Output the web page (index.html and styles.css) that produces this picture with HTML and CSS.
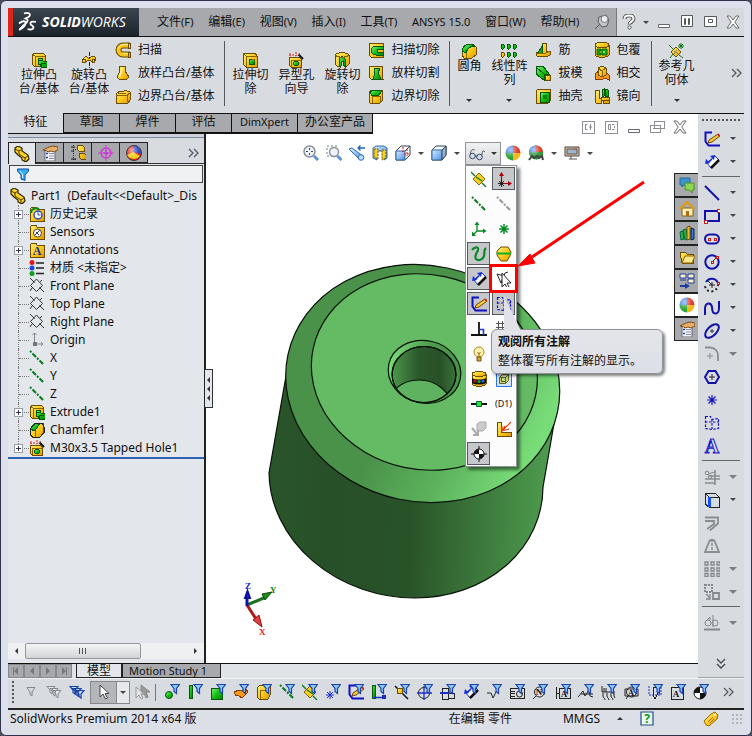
FILE: index.html
```html
<!DOCTYPE html>
<html lang="zh-CN">
<head>
<meta charset="utf-8">
<title>SolidWorks Premium 2014</title>
<link rel="stylesheet" href="styles.css">
</head>
<body>
<svg class="sprite" aria-hidden="true">
<defs>
<linearGradient id="gy" x1="0" y1="0" x2="1" y2="1"><stop offset="0" stop-color="#fff27a"/><stop offset=".55" stop-color="#fbc81c"/><stop offset="1" stop-color="#e09a00"/></linearGradient>
<linearGradient id="gb" x1="0" y1="0" x2="1" y2="1"><stop offset="0" stop-color="#d8ecff"/><stop offset="1" stop-color="#4a90e2"/></linearGradient>
<linearGradient id="gg" x1="0" y1="0" x2="1" y2="1"><stop offset="0" stop-color="#8cf08c"/><stop offset=".5" stop-color="#19c219"/><stop offset="1" stop-color="#078a07"/></linearGradient>
<radialGradient id="shine" cx=".35" cy=".3" r=".5"><stop offset="0" stop-color="#fff" stop-opacity=".6"/><stop offset="1" stop-color="#fff" stop-opacity="0"/></radialGradient>
</defs>
<symbol id="extrude" viewBox="0 0 16 16"><path class="y" d="M1 3l2-2h9l2 2v10l-1 1H3l-2-2z"/><path class="yl" d="M4 4h10M4 4v10M1 2l3 2"/><path class="g" d="M7 6h4l1 3h4v6h-6l-1-3H7z"/><path class="gl" d="M10 11h5M10 11v4M8 8h3"/></symbol>
<symbol id="revolve" viewBox="0 0 16 16"><path class="k" stroke-dasharray="4 1" d="M8 0v16"/><path class="y" d="M2 7c2-3 4-3 5-1s2 0 3-1c2-2 5 0 5 2 0 3-4 4-5 2-1-1-3-1-4 0-1 2-5 1-4-2z"/><circle class="y" cx="3" cy="9" r="1.500"/><circle class="y" cx="12.500" cy="9" r="1.500"/></symbol>
<symbol id="sweep" viewBox="0 0 16 16"><path d="M15 3.500H8a4.500 4.500 0 000 9h7" fill="none" stroke="#6b4c00" stroke-width="6"/><path d="M15 3.500H8a4.500 4.500 0 000 9h7" fill="none" stroke="#f8c41c" stroke-width="4"/><path d="M14 2.500H8a5 5 0 00-4.500 4M8 11.500h6" fill="none" stroke="#fff29a"/><path class="y" d="M13 10h2v5h-2zM13 1h2v5h-2z"/></symbol>
<symbol id="loft" viewBox="0 0 16 16"><path class="y" d="M5 1h5l1 2-1 3 4 6-2 2-4 1-4-1-2-2 3-6-1-3z"/><path d="M6.500 2v4l-2 6" fill="none" stroke="#fff8b0" stroke-width="1.500"/></symbol>
<symbol id="boundary" viewBox="0 0 16 16"><path class="y" d="M1 6l4-3 2 1 4-2 1 1 3 1v8l-2 3H1z"/><path class="yl" d="M1 7h11l3-2M12 7v7M3 5h8"/></symbol>
<symbol id="cutextrude" viewBox="0 0 16 16"><path class="y" d="M1 1h12l2 3v11H4l-3-3z"/><path class="yl" d="M4 4h11M4 4v11M1 1l3 3"/><path class="g" d="M7 7h5v5H7z"/><path d="M10 7.500h2v2" fill="none" stroke="#e06a2a"/></symbol>
<symbol id="hole" viewBox="0 0 16 16"><path class="y" d="M1 5h10l2 2v8H3l-2-2z"/><path class="yl" d="M3 8h10M3 8v7"/><circle class="g" cx="8" cy="11.500" r="2.500"/><path d="M2 1v2M5 2v2M8 0v2M11 1v1M1 3l2 1M7 4l2-1" stroke="#e02010"/><path d="M10 2l5 5" stroke="#111" stroke-width="2"/><path d="M9.500 1.500l1 1" stroke="#fff" stroke-width="1.500"/></symbol>
<symbol id="cutrevolve" viewBox="0 0 16 16"><path class="y" d="M1 3c2-3 12-3 14 0v9c-1 2-4 3-4 3V7H6v8s-4-1-5-3z"/><path class="g" d="M5 15V7c2-3 4-3 6 0v8l-2-2V9H7v5z"/><path class="yl" d="M1 3c3 3 11 3 14 0"/></symbol>
<symbol id="cutsweep" viewBox="0 0 16 16"><path class="y" d="M1 1h14v14H3l-2-2z"/><path class="g" d="M15 4H8a4 4 0 000 9h7v-3H9V7h6z"/></symbol>
<symbol id="cutloft" viewBox="0 0 16 16"><path class="y" d="M1 1h13l1 13H3l-2-2z"/><path class="g" d="M6 3h6l-2 5 3 6H5l2-6z"/></symbol>
<symbol id="cutboundary" viewBox="0 0 16 16"><path class="y" d="M1 4l3-2h10l1 10-3 3H2l-1-2z"/><path class="g" d="M2 4l4-2 8 1-3 4-7 1z"/><path class="yl" d="M4 8h8v7M4 8v7"/></symbol>
<symbol id="fillet" viewBox="0 0 16 16"><path class="y" d="M1 8l5-6 6-1 3 3v8l-4 3H3l-2-3z"/><path class="g" d="M1 8C2 3 5 1 9 1l5 2C9 3 6 6 5 10z"/><path class="yl" d="M5 10c0 2 0 3 1 5"/></symbol>
<symbol id="pattern" viewBox="0 0 16 16"><g class="g"><rect x="0" y="1" width="3" height="5" rx="1"/><rect x="6" y="1" width="3" height="5" rx="1"/><rect x="12" y="1" width="3" height="5" rx="1"/><rect x="6" y="9" width="3" height="5" rx="1"/><rect x="12" y="9" width="3" height="5" rx="1"/></g><rect class="y" x="0" y="9" width="3" height="5" rx="1"/></symbol>
<symbol id="rib" viewBox="0 0 16 16"><path class="y" d="M7 1h4v8h4v4l-4 2-9-1-1-3 6-3z"/><path class="g" d="M7 4v7H3z"/><path class="yl" d="M2 11h9l4-2"/></symbol>
<symbol id="draft" viewBox="0 0 16 16"><path class="g" d="M1 1h7l6 8v6H9L1 9z"/><path class="gl" d="M1 2l8 7v6M9 9h5"/><path class="y" d="M10 10h5v5h-5z"/></symbol>
<symbol id="shell" viewBox="0 0 16 16"><path class="y" d="M1 3l2-2h12v12l-2 2H1z"/><path class="g" d="M5 4h9v10H5z"/><path d="M8 7h4v4H8z" fill="#0a8a0a"/></symbol>
<symbol id="wrap" viewBox="0 0 16 16"><path class="y" d="M1 3v10c2 3 12 3 14 0V3z"/><ellipse class="y" cx="8" cy="3" rx="7" ry="2.500"/><path d="M3 7h4v2H5v2h2v2H3zM8 7h5v6H8z" fill="#16b416" stroke="#054d05" stroke-width=".8"/><path d="M10 9v2" stroke="#dfd"/></symbol>
<symbol id="intersect" viewBox="0 0 16 16"><path class="o" d="M1 9l4-3 3 3 4-2 3 3v5l-4-2-4 2-6-1z"/><path class="y" d="M4 3l4-2 4 2v7l-4 2-4-2z"/><path class="yl" d="M4 3l4 3 4-3M8 6v6"/></symbol>
<symbol id="mirror" viewBox="0 0 16 16"><path class="y" d="M1 2h4v8h2v5H2l-1-1zM9 10h6v5H9z"/><path class="g" d="M8 2l2-1v7L8 9zM11 1l3 1v6h-3z"/><path class="y" d="M7 9h8v3H7z"/></symbol>
<symbol id="refgeo" viewBox="0 0 16 16"><path class="y" d="M7 4l5 5-5 5-5-5z"/><path d="M0 2l4 4M10 12l4 3M1 15l3-4" stroke="#087808"/><path d="M12 0v6M9 3h6M10 1l4 4M14 1l-4 4" stroke="#087808"/><path d="M5 8l4 3M8 7l-3 4" stroke="#777"/></symbol>

<symbol id="pin" viewBox="0 0 16 16"><path d="M1 15l5-5" stroke="#555"/><path d="M5 3l7-2 3 5-2 6-5 1-4-5z" fill="#c4c6c9" stroke="#5b5e62"/><circle cx="10.500" cy="5" r="3.500" fill="#eceef0" stroke="#74777b"/></symbol>
<symbol id="help" viewBox="0 0 16 16"><path d="M3.500 5c0-5 9-5 9 0 0 3-4 2.500-4 5.500" fill="none" stroke="#555" stroke-width="4"/><path d="M3.500 4.800c0-4.500 9-4.500 9 0 0 3-4 2.500-4 5" fill="none" stroke="#fff" stroke-width="2"/><circle cx="8.500" cy="13.500" r="1.600" fill="#fff" stroke="#555"/></symbol>
<symbol id="min" viewBox="0 0 16 16"><path d="M2.500 10.500h11v3h-11z" fill="#fff" stroke="#66696d"/></symbol>
<symbol id="tile" viewBox="0 0 16 16"><path d="M2.500 1.500h11v11h-11z" fill="#fff" stroke="#55585c"/><path d="M5.500 4.500h1v6h-1zM9.500 4.500h1v6h-1z" fill="none" stroke="#55585c"/></symbol>
<symbol id="max" viewBox="0 0 16 16"><path d="M2.500 2.500h12v10h-12z" fill="#fff" stroke="#55585c"/><path d="M6.500 5.500h4v3h-4z" fill="none" stroke="#55585c"/></symbol>
<symbol id="close" viewBox="0 0 16 16"><path d="M2 2h3l3 4 3-4h3L9.800 8l4.200 6h-3L8 10l-3 4H2l4.200-6z" fill="#fff" stroke="#686b6f"/></symbol>
<symbol id="tile1" viewBox="0 0 16 16"><path class="w" d="M2 2h12v12H2z"/><path class="gr" d="M7.500 5.500h-2v5h2M10.500 5v6M9 8h3"/></symbol>
<symbol id="tile2" viewBox="0 0 16 16"><path class="w" d="M2 2h12v12H2z"/><path class="gr" d="M5.500 5.500h2v5h-2zM9 5.500h2.500M9 10.500h2.500M11.500 7v2"/></symbol>
<symbol id="restore" viewBox="0 0 16 16"><path class="w" d="M5 2h10v7H5zM1 6h10v7H1z"/><path class="gr" d="M4 9.500h4"/></symbol>

<symbol id="part" viewBox="0 0 16 16"><path d="M1 2l3-2 4 2v3l6 4 1 4-3 3-4-2v-2L4 9 1 6z" fill="#ffd42a" stroke="#2b2100" stroke-width="1.200"/><path d="M1 3l4 2 3-2M5 5v3l6 4 3-2M11 12v3" fill="none" stroke="#4b3900"/></symbol>
<symbol id="props" viewBox="0 0 16 16"><path d="M3 5h10v11H3z" fill="#f6f6fa" stroke="#667"/><path d="M7 8.500h5M7 11h5M7 13.500h5" stroke="#88a"/><path d="M4.500 8h1v1h-1zM4.500 12h1v1h-1z" fill="#14a" stroke="#14a"/><path d="M1 5l6-3 4-1 5 1v3l-4 2-3-1-3 1-1-1z" fill="#e6b06c" stroke="#7a4b18"/></symbol>
<symbol id="config" viewBox="0 0 16 16"><path class="k" stroke-dasharray="1 1" d="M3 0v14h4M3 4h4"/><path d="M1 2h4M1 6h3M1 14h5" stroke="#222"/><path class="y" d="M7 1l5-1 2 2v4H9L7 4zM9 9l5-1 2 2v4h-5l-2-2z"/></symbol>
<symbol id="target" viewBox="0 0 16 16"><circle cx="8" cy="8" r="5" fill="none" stroke="#d038d8" stroke-width="1.500"/><path d="M8 0v16M0 8h16" stroke="#d038d8"/><path d="M8 5.500v5M5.500 8h5" stroke="#d038d8" stroke-width="1.500"/></symbol>
<symbol id="ball" viewBox="0 0 16 16"><path d="M8 8V.5A7.500 7.500 0 0115.500 8z" fill="#e23a28"/><path d="M8 8h7.500A7.500 7.500 0 018 15.500z" fill="#f2b81c"/><path d="M8 8v7.500A7.500 7.500 0 01.5 8z" fill="#2da53a"/><path d="M8 .5A7.500 7.500 0 00.5 8H8z" fill="#3a7ee0"/><circle cx="8" cy="8" r="7.500" fill="url(#shine)"/></symbol>
<symbol id="ball2" viewBox="0 0 16 16"><circle cx="8" cy="8" r="7.500" fill="#e02a1c" stroke="#433"/><path d="M8 .5A7.500 7.500 0 0115 9L8 7z" fill="#2650c8"/><path d="M1 10l6-3 7 4a8 8 0 01-13-1z" fill="#f4cc20"/><circle cx="8" cy="8" r="7" fill="url(#shine)"/></symbol>
<symbol id="ballg" viewBox="0 0 16 16"><circle cx="8" cy="7.500" r="7" fill="#2f9a3a"/><path d="M8 7V.5A7 7 0 0115 7z" fill="#e23a28"/><path d="M8 7h7a7 7 0 01-7 7.500z" fill="#2f9a3a"/><path d="M1 7.500A7 7 0 018 .5V7z" fill="#3a7ee0"/><circle cx="8" cy="7.500" r="7" fill="url(#shine)"/><path d="M1 15l3-4 2 2 3-2 2 2 3-2 1 4" fill="none" stroke="#444" stroke-width="2"/></symbol>
<symbol id="funnel" viewBox="0 0 16 16"><path d="M2.500 3h11v2L10 9v5.500l-4-1.500V9L2.500 5z" fill="#35aef5" stroke="#0b4fa6"/><path d="M5 5l2.500 3v4" fill="none" stroke="#cff0ff"/></symbol>
<symbol id="history" viewBox="0 0 16 16"><path class="y" d="M1 3l2-2h4l1 2h7v12H1z"/><circle cx="9" cy="9" r="4" fill="#fff" stroke="#2a48b8" stroke-width="1.400"/><path d="M9 6v3h2.500" fill="none" stroke="#2a48b8"/><path d="M2 7c0-4 5-6 8-4" fill="none" stroke="#0a8c1c" stroke-width="2"/></symbol>
<symbol id="sensor" viewBox="0 0 16 16"><path class="y" d="M1 3l2-2h4l1 2h7v12H1z"/><circle cx="8.500" cy="9" r="4" fill="#fff" stroke="#444"/><path d="M6 11l5-5M7 8l3 3" stroke="#446"/></symbol>
<symbol id="annot" viewBox="0 0 16 16"><path class="y" d="M1 3l2-2h4l1 2h7v12H1z"/></symbol>
<symbol id="material" viewBox="0 0 16 16"><circle cx="3" cy="2.500" r="2.500" fill="#e0181c"/><circle cx="3" cy="8" r="2.500" fill="#1c48e0"/><circle cx="3" cy="13.500" r="2.500" fill="#10a018"/><path d="M7 3h8M7 8h8M7 13.500h8" stroke="#222" stroke-width="1.500"/></symbol>
<symbol id="plane" viewBox="0 0 16 16"><path d="M7.500 1l6 6.500-6 6-6-6zM1 0l14 14M13 2l-2 2M3 10l-2 3" fill="none" stroke="#333"/><path d="M7.500 2.500l5 5-5 4.800-4.800-4.800z" fill="#e3e6ea"/></symbol>
<symbol id="origin" viewBox="0 0 16 16"><path d="M5.500 1v11H14M3.500 3l2-2 2 2M12 10l2 2-2 2" fill="none" stroke="#85888c"/><path d="M4 10h4v4H4z" fill="#777"/></symbol>
<symbol id="axis" viewBox="0 0 16 16"><path d="M1 1l14 14" stroke="#057c1c" stroke-width="2" stroke-dasharray="2 1.500 5 1.500"/></symbol>
<symbol id="axisgray" viewBox="0 0 16 16"><path d="M1 1l14 14" stroke="#999" stroke-width="2" stroke-dasharray="2 1.500 5 1.500"/></symbol>
<symbol id="chamfer" viewBox="0 0 16 16"><path class="y" d="M1 7l6-5 7-1 1 9-4 5H3l-2-3z"/><path class="g" d="M1 7l5-6h5L6 9z"/><path class="yl" d="M6 9l1 6"/><path class="k" d="M1 7l6-6h6l2 4v6l-4 4H4l-3-3z"/></symbol>

<symbol id="zoomfit" viewBox="0 0 16 16"><circle cx="6.500" cy="6.500" r="5.500" fill="#eef3fa" stroke="#8b929c" stroke-width="1.500"/><path d="M6.500 3v7M3 6.500h7" stroke="#444" stroke-dasharray="2 3"/><path d="M11 11l4 4" stroke="#5a94d8" stroke-width="3"/></symbol>
<symbol id="zoomarea" viewBox="0 0 16 16"><path d="M1 1h10v10H1z" fill="none" stroke="#777" stroke-dasharray="2 2"/><circle cx="8" cy="7" r="4.500" fill="#eef3fa" stroke="#8b929c" stroke-width="1.500"/><path d="M11.500 11l4 4" stroke="#5a94d8" stroke-width="3"/></symbol>
<symbol id="prevview" viewBox="0 0 16 16"><path d="M0 4l3-1 11 8-3 4z" fill="url(#gb)" stroke="#2f6fb8"/><circle cx="12" cy="12.500" r="2.800" fill="#b8dcff" stroke="#2f6fb8"/><path d="M16 3H9M11.500 .5L9 3l2.500 2.500" fill="none" stroke="#1d62c0" stroke-width="1.300"/></symbol>
<symbol id="section" viewBox="0 0 16 16"><path d="M1 3l3-2h8l3 2v10l-3 2V6H5v9l-4-2z" fill="url(#gb)" stroke="#36689e"/><path d="M2 4h4v10l-4-2zM10 5h4v8l-4 2z" fill="#f5cc2a" stroke="#7a5a00" stroke-dasharray="2 1"/></symbol>
<symbol id="vieworient" viewBox="0 0 16 16"><path d="M1 6l5-5h9v9l-5 5H1z" fill="#fff" stroke="#345"/><path d="M1 6h9v9H1z" fill="url(#gb)" stroke="#36689e"/><path d="M10 6l5-5" stroke="#345"/><path d="M8 2v5M12 4v7M9 9h5" stroke="#d01818" stroke-dasharray="2 1"/></symbol>
<symbol id="cube" viewBox="0 0 16 16"><path d="M1 5l4-4h10v9l-4 5H1z" fill="#f2f8ff" stroke="#345"/><path d="M1 5h10v10H1z" fill="url(#gb)" stroke="#36689e"/><path d="M11 5l4-4v9l-4 5z" fill="#8db4e2" stroke="#345"/></symbol>
<symbol id="glasses" viewBox="0 0 16 16"><circle cx="3.500" cy="10" r="2.800" fill="#c8def4" stroke="#445"/><circle cx="10.500" cy="11" r="2.800" fill="#c8def4" stroke="#445"/><path d="M6 10h2M1.500 8c0-4 2-5 4-4M13 9c0-4 1-5 3-3" fill="none" stroke="#445"/></symbol>
<symbol id="display" viewBox="0 0 16 16"><path d="M1 2h14v9H1z" fill="#e3c9a8" stroke="#444"/><path d="M3 4h10v5H3z" fill="#9cb6cf" stroke="#654"/><path d="M5 14h8M7 11v3" stroke="#555"/><path d="M9 5l5-3" stroke="#a63"/></symbol>

<symbol id="m-plane" viewBox="0 0 16 16"><path d="M8 2l6 6-6 6-6-6z" fill="#f8cf22" stroke="#8a6400"/><path d="M0 1l4 4M5 6l6 4M11 12l4 4" stroke="#067a18" stroke-width="1.300"/></symbol>
<symbol id="m-origin" viewBox="0 0 16 16"><path d="M5.500 13V2M5 12.500h10" stroke="#b00010" stroke-width="1.200"/><path d="M3 5l2.500-4L8 5zM12 10l4 2.500-4 2.500z" fill="#b00010"/><path d="M3 10l5 5M8 10l-5 5M5.500 9v7M2 12.500h6" stroke="#222"/></symbol>
<symbol id="m-triad" viewBox="0 0 16 16"><path d="M6 2v8h8M6 10l-4 4" fill="none" stroke="#058a20" stroke-width="1.300"/><path d="M3.500 4L6 .5 8.500 4zM12 7.500l3.500 2.500-3.500 2.500zM1 10.500V15h4z" fill="#058a20"/></symbol>
<symbol id="m-point" viewBox="0 0 16 16"><path d="M8 3v10M3 8h10M4.500 4.500l7 7M11.500 4.500l-7 7" stroke="#058a20" stroke-width="1.500"/></symbol>
<symbol id="m-curve" viewBox="0 0 16 16"><path d="M1 4c2-3 7-4 6 0-1 3-4 6-2 9 2 2 7 1 8-3 1-3-1-6 2-8" fill="none" stroke="#07882a" stroke-width="2.200"/></symbol>
<symbol id="m-part" viewBox="0 0 16 16"><path d="M5 1h7l3 5-1 4-3 5H5L1 9l0-4z" fill="url(#gy)" stroke="#6b4c00"/><path d="M1 7.500h14" stroke="#0db321" stroke-width="2"/></symbol>
<symbol id="dim" viewBox="0 0 16 16"><path d="M7 14l8-8-4-4-8 7z" fill="#fff" stroke="#1430d8"/><path d="M7 14l8-8" stroke="#111" stroke-width="2.500"/><path d="M4 9l4-4" stroke="#1430d8" stroke-width="1.500"/><path d="M1 10l1-5 4 4zM11 1L6 2l4 4z" fill="#1430d8"/></symbol>
<symbol id="sketch" viewBox="0 0 16 16"><path d="M8 1.500H1.500v9l3 4H16" fill="none" stroke="#1010c0" stroke-width="2"/><path d="M5 9l9-6 2 2-8 6-4 1z" fill="#f8c93a" stroke="#70450e"/><path d="M13 3.500l2 2 1-1-1-2z" fill="#d02020"/></symbol>
<symbol id="m-note" viewBox="0 0 16 16"><path d="M1 3l4 9 4-10 3-1M1 3l7 2M5 12l5-2" fill="none" stroke="#222"/><path d="M6 2v14l3-3 2 4 2-1-2-4h4z" fill="#fff" stroke="#222"/></symbol>
<symbol id="region" viewBox="0 0 16 16"><path d="M1.500 1.500h5l1 3 7-1v10l-7 1-6-1zM1 7h14M8 4v10" fill="none" stroke="#1414c0" stroke-width="1.200" stroke-dasharray="2.500 1.500"/></symbol>
<symbol id="m-perp" viewBox="0 0 16 16"><path d="M8 1v13M0 14h16" stroke="#111" stroke-width="1.800"/><path d="M8 8.500h4.500V14" fill="none" stroke="#1838e0" stroke-width="1.600"/></symbol>
<symbol id="m-grid" viewBox="0 0 16 16"><path d="M2.500 0v10M6.500 0v10M0 2.500h10M0 6.500h10" stroke="#555"/></symbol>
<symbol id="bulb" viewBox="0 0 16 16"><circle cx="8" cy="6" r="5" fill="#fff2b0" stroke="#b08820"/><path d="M6 11h4v4H6z" fill="#d8a83a" stroke="#775511"/><path d="M6.500 6l1.500 2 1.500-2M8 8v3" fill="none" stroke="#a16b10"/></symbol>
<symbol id="m-can" viewBox="0 0 16 16"><path class="y" d="M1 3v10c2 3 12 3 14 0V3z"/><path d="M1 7c3 2 11 2 14 0v5c-3 2-11 2-14 0z" fill="#111"/><circle cx="4" cy="10" r="1.500" fill="#e02"/><circle cx="8" cy="10.500" r="1.500" fill="#0b2"/><circle cx="12" cy="10" r="1.500" fill="#26f"/><ellipse class="y" cx="8" cy="3" rx="7" ry="2.300"/></symbol>
<symbol id="m-box" viewBox="0 0 16 16"><path d="M.5 .5h15v15H.5z" fill="#cfe4fb" stroke="#2874e8"/><path d="M3.500 6.500l3-3h6v6l-3 3h-6zM3.500 6.500h6l3-3M9.500 6.500v6" fill="#dfc88a" stroke="#5a6a1c"/><path d="M5.500 6.500h4v4h-4z" fill="#b4e07a" stroke="#3a6a14"/></symbol>
<symbol id="m-line" viewBox="0 0 16 16"><path d="M0 8h16" stroke="#111" stroke-width="2"/><path d="M5.500 5.500h5v5h-5z" fill="#2ee03a" stroke="#063"/></symbol>
<symbol id="m-cam" viewBox="0 0 16 16"><path d="M6 3l3-2h6v6l-3 3H6z" fill="#c9cbcd" stroke="#a9abad"/><path d="M1 7l5 6M2 14h5V9" fill="none" stroke="#aaa" stroke-width="2"/></symbol>
<symbol id="m-weld" viewBox="0 0 16 16"><path class="y" d="M1 1h4v10h10v4H1z"/><path d="M6 10l9-9M6 10l0-5M6 10l7-2M6 10l3-5" stroke="#e0400c" stroke-width="1.200"/></symbol>
<symbol id="com" viewBox="0 0 16 16"><path d="M8 0v16M0 8h16" stroke="#111"/><circle cx="8" cy="8" r="5" fill="#fff" stroke="#111"/><path d="M8 8L4.500 4.500a5 5 0 017 0zM8 8l3.500 3.500a5 5 0 01-7 0z" fill="#111" transform="rotate(-45 8 8)"/></symbol>

<symbol id="chat" viewBox="0 0 16 16"><path d="M1 1h10v7H5l-2 2V8H1z" fill="#3b93cf" stroke="#276b9c"/><path d="M6 6h9v7h-2v3l-3-3H6z" fill="#8bd455" stroke="#4c9620"/></symbol>
<symbol id="home" viewBox="0 0 16 16"><path d="M3 7h11v8H3z" fill="#fff0b8" stroke="#86600c"/><path d="M1 8l7-7 7 7" fill="none" stroke="#e09a10" stroke-width="2.200"/><path d="M7 10h3v5H7z" fill="#b06a18"/></symbol>
<symbol id="books" viewBox="0 0 16 16"><path d="M1 7l3-1 1 8-3 1z" fill="#2ab040" stroke="#064"/><path d="M4 5l3-1 2 10-3 1z" fill="#2ab040" stroke="#064"/><path d="M8 2l3-1v13l-3 1z" fill="#f0c02a" stroke="#650"/><path d="M12 3l3 1v10l-3 1z" fill="#3b6fe0" stroke="#124"/></symbol>
<symbol id="folder" viewBox="0 0 16 16"><path class="y" d="M1 3h5l2 2h6v9H3z"/><path d="M3 14l3-7h10l-3 7z" fill="#ffe88a" stroke="#8a6200"/></symbol>
<symbol id="palette" viewBox="0 0 16 16"><path d="M1 1h6v4H1zM9 1h6v4H9zM9 6h6v4H9z" fill="#fff2c2" stroke="#1c3ca0"/><path d="M1 7h6" stroke="#1c3ca0"/><path d="M1 13h7" stroke="#1c3ca0" stroke-width="2"/><path d="M6 10l5 3-5 3z" fill="#1c3ca0"/></symbol>

<symbol id="s-line" viewBox="0 0 16 16"><path class="b" d="M1 1l14 14"/></symbol>
<symbol id="s-rect" viewBox="0 0 16 16"><path class="b" d="M1 3h14v10H1z"/><path class="r" d="M0 12h3v3H0zM13 1h3v3h-3z"/></symbol>
<symbol id="s-slot" viewBox="0 0 16 16"><rect class="b" x="1" y="3.500" width="14" height="9" rx="4.500"/><path class="r" d="M4 7h2v2H4zM10 7h2v2h-2z"/></symbol>
<symbol id="s-circle" viewBox="0 0 16 16"><circle class="b" cx="8" cy="8" r="6.700"/><path d="M8 8l4-4" stroke="#333"/><path class="r" d="M7 7h2v2H7zM12 2h2v2h-2z"/></symbol>
<symbol id="s-arc" viewBox="0 0 16 16"><path class="b" d="M2 5c3-5 10-4 12 1"/><path d="M14 7c0 9-12 10-13 2" fill="none" stroke="#222" stroke-width="2" stroke-dasharray="2 2.500"/><path d="M8 5v6M5 8h6M4 4l4 4" stroke="#222"/><path class="r" d="M13 5h2v2h-2z"/></symbol>
<symbol id="s-spline" viewBox="0 0 16 16"><path class="b" d="M1 15V9c0-7 6-7 7-2 0 9 7 8 7 1V1"/></symbol>
<symbol id="s-ellipse" viewBox="0 0 16 16"><ellipse class="b" cx="8" cy="8" rx="8.500" ry="4.500" transform="rotate(-45 8 8)"/><path d="M8 6v4M6 8h4" stroke="#333"/></symbol>
<symbol id="s-fillet" viewBox="0 0 16 16"><path d="M1 1.500h5c5 0 8 4 8 8V15" fill="none" stroke="#8a8d90" stroke-width="1.800"/><path d="M6 7v6M3 10h6" stroke="#8a8d90"/></symbol>
<symbol id="s-hex" viewBox="0 0 16 16"><path class="b" d="M4.500 2h7L15 8l-3.500 6h-7L1 8z"/><path d="M8 5v6M5 8h6" stroke="#223"/></symbol>
<symbol id="s-point" viewBox="0 0 16 16"><path d="M8 3v10M3 8h10M4.500 4.500l7 7M11.500 4.500l-7 7" stroke="#1616c0" stroke-width="1.200"/></symbol>
<symbol id="s-trim" viewBox="0 0 16 16"><path d="M1 10h15M1 14h10M11 1v15M5 7h11" stroke="#8a8d90" stroke-width="1.600"/><circle class="gr" cx="3" cy="4" r="1.800"/><circle class="gr" cx="6" cy="8" r="1.800"/><path class="gr" d="M4 5l7-2"/></symbol>
<symbol id="s-convert" viewBox="0 0 16 16"><path class="k" d="M1 1l4 4h10v10H5l-4-3zM1 1h10l4 4"/><path d="M5.500 5v10" stroke="#1650ff" stroke-width="3"/></symbol>
<symbol id="s-offset" viewBox="0 0 16 16"><path d="M1 2.500h13v6l-8 7M1 6h9v3l-7 5" fill="none" stroke="#8a8d90" stroke-width="1.800"/></symbol>
<symbol id="s-mirror" viewBox="0 0 16 16"><path d="M5 4L1 14h14L11 4c-1-3-5-3-6 0z" fill="none" stroke="#8a8d90" stroke-width="1.800"/><path d="M8 1v14" stroke="#8a8d90" stroke-width="1.500" stroke-dasharray="3 1"/></symbol>
<symbol id="s-pattern" viewBox="0 0 16 16"><path d="M1 1h3v3H1zM7 1h3v3H7zM13 1h3v3h-3zM1 7h3v3H1zM7 7h3v3H7zM13 7h3v3h-3zM1 12.500h3v3H1zM7 12.500h3v3H7zM13 12.500h3v3h-3z" fill="none" stroke="#85888c" stroke-width="1.300"/></symbol>
<symbol id="s-move" viewBox="0 0 16 16"><path d="M1 1h7v7H1z" fill="none" stroke="#85888c" stroke-width="2" stroke-dasharray="2 1"/><path d="M9 9h6v6H9z" fill="none" stroke="#85888c" stroke-width="1.800"/><path d="M2 10l4 4M6 10v5H2" fill="none" stroke="#85888c" stroke-width="1.300"/></symbol>
<symbol id="s-rel" viewBox="0 0 16 16"><path d="M0 14.500h16" stroke="#85888c" stroke-width="2"/><path class="gr" d="M9 0v12M3 5l3-3v3"/><circle class="gr" cx="4" cy="8" r="3"/><circle class="gr" cx="11" cy="8" r="3"/></symbol>
<symbol id="chev" viewBox="0 0 12 12"><path d="M1 2l4 4-4 4M6 2l4 4-4 4" fill="none" stroke="#55585c" stroke-width="1.300"/></symbol>
<symbol id="chevdown" viewBox="0 0 12 12"><path d="M2 1l4 4 4-4M2 6l4 4 4-4" fill="none" stroke="#44474b" stroke-width="1.300"/></symbol>

<symbol id="fun" viewBox="0 0 16 16"><path d="M7 .5h8.500l-3 4v5l-2.500-2v-3z" fill="#8cc8ff" stroke="#1c44a8" stroke-width="1.200"/></symbol>
<symbol id="f-gray" viewBox="0 0 16 16"><path class="gr" d="M4 3.500h8L9 8v4L7 10.500V8z"/></symbol>
<symbol id="f-gray2" viewBox="0 0 16 16"><path d="M1 2.500h8L6 6v4L4 8.500V6zM4 4.500h8L9 8v4l-2-1.500V8zM7 6.500h8L12 10v4l-2-1.500V10z" fill="#e4e6e9" stroke="#85888c"/></symbol>
<symbol id="f-blue" viewBox="0 0 16 16"><path d="M1 2.500h8L6 6v4L4 8.500V6zM4 4.500h8L9 8v4l-2-1.500V8zM7 6.500h8L12 10v4l-2-1.500V10z" fill="#c4e2ff" stroke="#1840a8" stroke-width="1.200"/></symbol>
<symbol id="cursor" viewBox="0 0 16 16"><path d="M4 1v12l3-3 2.500 5 2-1L9 9.500h4z" fill="#fff" stroke="#444"/></symbol>
<symbol id="cursor2" viewBox="0 0 16 16"><path d="M7 1v11l3-3 2 5 2-1-2-5h4z" fill="#999" stroke="#888"/><path d="M2 3v11l3-3 2 4 2-1-2-4h3z" fill="#e4e4e4" stroke="#999"/></symbol>
<symbol id="f1" viewBox="0 0 16 16"><circle cx="5" cy="11" r="3.500" fill="url(#gg)" stroke="#04580a"/></symbol>
<symbol id="f2" viewBox="0 0 16 16"><path class="g" d="M2 1h3v13H2z"/></symbol>
<symbol id="f3" viewBox="0 0 16 16"><path class="g" d="M1 4h11v11H1z"/></symbol>
<symbol id="f4" viewBox="0 0 16 16"><path class="o" d="M1 8l5-2 2 1 5-2 2 3-6 6-4-3-2 1z"/></symbol>
<symbol id="f5" viewBox="0 0 16 16"><path class="y" d="M1 4l3-3h10v10l-2 4H3l-2-2z"/><path class="yl" d="M4 6h9M4 6v9"/></symbol>
<symbol id="f8" viewBox="0 0 16 16"><path d="M5 7v8M1 11h8M2 8l6 6M8 8l-6 6" stroke="#1830d0"/></symbol>
<symbol id="f10" viewBox="0 0 16 16"><path class="g" d="M1 1h3v13H1z"/><path d="M3 13.500h10" stroke="#1430c0" stroke-width="1.500"/><path d="M11 11h4v4h-4z" fill="#1430c0"/></symbol>
<symbol id="f11" viewBox="0 0 16 16"><path d="M1 2l13 13" stroke="#111" stroke-width="1.500"/><circle class="y" cx="6" cy="7" r="3"/></symbol>
<symbol id="f12" viewBox="0 0 16 16"><circle cx="7" cy="9" r="5.500" fill="none" stroke="#222"/><path d="M7 2v14M0 9h15" stroke="#1830d0" stroke-width="1.300"/></symbol>
<symbol id="f13" viewBox="0 0 16 16"><path class="k" d="M2 4h6v11H2zM8 9h6v5H8z"/><path d="M0 9h10" stroke="#1830d0" stroke-width="2"/></symbol>
<symbol id="f15" viewBox="0 0 16 16"><path d="M1 9h4l2 5L12 4" fill="none" stroke="#222"/></symbol>
<symbol id="f16" viewBox="0 0 16 16"><path class="k" d="M1 4h14v10H1zM2 7h4M2 9h4M2 12h4"/><circle cx="10.500" cy="10" r="3" fill="none" stroke="#222"/></symbol>
<symbol id="f17" viewBox="0 0 16 16"><circle cx="7.500" cy="8" r="5" fill="none" stroke="#222"/><path d="M4 12l-3 3" stroke="#222"/></symbol>
<symbol id="f18" viewBox="0 0 16 16"><path class="k" d="M1 3v12M4 4h11v10H4zM1 9h3"/></symbol>
<symbol id="f19" viewBox="0 0 16 16"><path d="M0 13l5-6 2 5 4-6 1 6 3 1M3 10h12" fill="none" stroke="#222"/></symbol>
<symbol id="f20" viewBox="0 0 16 16"><path d="M1 2v6h13M3 4v4M5 4v4M2 9v3c0 2 2 2 2 4M6 9v3c0 2 2 2 2 4M10 9v3c0 2 2 2 2 4M13 9v3c0 1 1 1 1 2" fill="none" stroke="#222"/></symbol>
<symbol id="f21" viewBox="0 0 16 16"><circle cx="7.500" cy="8" r="5" fill="none" stroke="#222"/><path d="M1 5h13v7H1zM4 12l-2 3" fill="none" stroke="#222"/></symbol>
<symbol id="f22" viewBox="0 0 16 16"><path d="M2 2v9h12V2" fill="none" stroke="#1830d0" stroke-dasharray="2 1"/><path class="k" d="M6 3h4v8l-2 4-2-4z"/></symbol>
<symbol id="f23" viewBox="0 0 16 16"><path class="k" d="M1 3h12v12H1z"/></symbol>
<symbol id="f24" viewBox="0 0 16 16"><circle cx="7" cy="9" r="6" fill="#fff" stroke="#111"/><path d="M7 9V3a6 6 0 00-6 6zM7 9v6a6 6 0 006-6z" fill="#111"/></symbol>
<symbol id="qmark" viewBox="0 0 16 16"><path d="M2 1h12v13H2z" fill="#e9f7ee" stroke="#1f4e8c" stroke-width="1.200"/></symbol>
<symbol id="tag" viewBox="0 0 16 16"><path d="M1 10l7-7 4-2 3 3-1 4-8 7-3-1z" fill="url(#gy)" stroke="#a06a00"/><path d="M5 11l5-5M7 12l4-4" stroke="#a06a00"/><circle cx="12" cy="4" r="1" fill="#fff"/></symbol>
</svg>

<div class="window">
<header class="titlebar">
  <div class="brand">
    <svg class="brand-mark" viewBox="0 0 20 22" aria-hidden="true"><path d="M7 2.500c4-1.500 7 0 5.500 2.500-1 1.500-3 2-4 2.500 3 1 3 3-1 6-2 1.500-3 3-5 5M2 12.500c5-4 8-2 6 1.500C7 16.500 4 18 2 19M19 11c-4-1-6 0-5.500 2 .5 1.500 3 1.500 3 3.500 0 2-3 2.500-6 1.500" fill="none" stroke="#fff" stroke-width="1.800"/></svg>
    <span class="brand-name"><b>SOLID</b>WORKS</span>
  </div>
  <nav class="menus">
    <button>文件<span class="key">(F)</span></button><button>编辑<span class="key">(E)</span></button><button>视图<span class="key">(V)</span></button><button>插入<span class="key">(I)</span></button><button>工具<span class="key">(T)</span></button><button><span class="key">ANSYS 15.0</span></button><button>窗口<span class="key">(W)</span></button><button>帮助<span class="key">(H)</span></button><button aria-label="固定"><svg class="icon"><use href="#pin"/></svg></button>
  </nav>
  <div class="win-controls">
    <button aria-label="帮助"><svg class="icon"><use href="#help"/></svg></button><button class="caret" aria-label="更多"></button><button aria-label="最小化"><svg class="icon"><use href="#min"/></svg></button><button aria-label="平铺"><svg class="icon"><use href="#tile"/></svg></button><button aria-label="最大化"><svg class="icon"><use href="#max"/></svg></button><button aria-label="关闭"><svg class="icon"><use href="#close"/></svg></button>
  </div>
</header>

<section class="ribbon">
  <div class="group">
    <button class="big"><svg class="icon"><use href="#extrude"/></svg><span>拉伸凸<br>台/基体</span></button>
    <button class="big spaced"><svg class="icon"><use href="#revolve"/></svg><span>旋转凸<br>台/基体</span></button>
    <div class="stack">
      <button><svg class="icon"><use href="#sweep"/></svg>扫描</button>
      <button><svg class="icon"><use href="#loft"/></svg>放样凸台/基体</button>
      <button><svg class="icon"><use href="#boundary"/></svg>边界凸台/基体</button>
    </div>
  </div>
  <div class="group">
    <button class="big"><svg class="icon"><use href="#cutextrude"/></svg><span>拉伸切<br>除</span></button>
    <button class="big"><svg class="icon"><use href="#hole"/></svg><span>异型孔<br>向导</span></button>
    <button class="big"><svg class="icon"><use href="#cutrevolve"/></svg><span>旋转切<br>除</span></button>
    <div class="stack">
      <button><svg class="icon"><use href="#cutsweep"/></svg>扫描切除</button>
      <button><svg class="icon"><use href="#cutloft"/></svg>放样切割</button>
      <button><svg class="icon"><use href="#cutboundary"/></svg>边界切除</button>
    </div>
  </div>
  <div class="group">
    <button class="big drop narrow"><svg class="icon"><use href="#fillet"/></svg><span>圆角</span><i class="arrow"></i></button>
    <button class="big drop"><svg class="icon"><use href="#pattern"/></svg><span>线性阵<br>列</span><i class="arrow"></i></button>
    <div class="stack">
      <button><svg class="icon"><use href="#rib"/></svg>筋</button>
      <button><svg class="icon"><use href="#draft"/></svg>拔模</button>
      <button><svg class="icon"><use href="#shell"/></svg>抽壳</button>
    </div>
    <div class="stack second">
      <button><svg class="icon"><use href="#wrap"/></svg>包覆</button>
      <button><svg class="icon"><use href="#intersect"/></svg>相交</button>
      <button><svg class="icon"><use href="#mirror"/></svg>镜向</button>
    </div>
  </div>
  <div class="group last">
    <button class="big drop"><svg class="icon"><use href="#refgeo"/></svg><span>参考几<br>何体</span><i class="arrow"></i></button>
  </div>
  <button class="more" aria-label="更多命令"><svg class="chev"><use href="#chev"/></svg></button>
</section>

<div class="workspace">
<div class="document">
  <div class="tabrow">
    <nav class="cmd-tabs"><button class="active">特征</button><button>草图</button><button>焊件</button><button>评估</button><button class="wide">DimXpert</button><button class="wider">办公室产品</button></nav>
    <div class="doc-controls"><button aria-label="左平铺"><svg class="icon"><use href="#tile1"/></svg></button><button aria-label="右平铺"><svg class="icon"><use href="#tile2"/></svg></button><button aria-label="最小化文档"><svg class="icon"><use href="#min"/></svg></button><button aria-label="还原文档"><svg class="icon"><use href="#restore"/></svg></button><button aria-label="关闭文档"><svg class="icon"><use href="#close"/></svg></button></div>
  </div>
  <div class="body">
    <aside class="panel">
      <div class="panel-tabs"><button class="active" aria-label="设计树"><svg class="icon"><use href="#part"/></svg></button><button aria-label="属性"><svg class="icon"><use href="#props"/></svg></button><button aria-label="配置"><svg class="icon"><use href="#config"/></svg></button><button aria-label="尺寸专家"><svg class="icon"><use href="#target"/></svg></button><button aria-label="外观"><svg class="icon"><use href="#ball2"/></svg></button><button class="more" aria-label="更多标签"><svg class="chev"><use href="#chev"/></svg></button></div>
      <label class="filter"><svg class="icon"><use href="#funnel"/></svg><input type="text" aria-label="过滤"></label>
      <div class="tree-root"><svg class="icon"><use href="#part"/></svg><span>Part1&nbsp; (Default&lt;&lt;Default&gt;_Dis</span></div>
      <ul class="tree">
        <li><span class="branch"><button aria-label="展开"></button></span><svg class="icon"><use href="#history"/></svg>历史记录</li>
        <li><span class="branch"></span><svg class="icon"><use href="#sensor"/></svg>Sensors</li>
        <li><span class="branch"><button aria-label="展开"></button></span><svg class="icon" viewBox="0 0 16 16"><use href="#annot"/><text class="letter blue" x="8" y="13">A</text></svg>Annotations</li>
        <li><span class="branch"></span><svg class="icon"><use href="#material"/></svg>材质 &lt;未指定&gt;</li>
        <li><span class="branch"></span><svg class="icon"><use href="#plane"/></svg>Front Plane</li>
        <li><span class="branch"></span><svg class="icon"><use href="#plane"/></svg>Top Plane</li>
        <li><span class="branch"></span><svg class="icon"><use href="#plane"/></svg>Right Plane</li>
        <li><span class="branch"></span><svg class="icon"><use href="#origin"/></svg>Origin</li>
        <li><span class="branch"></span><svg class="icon"><use href="#axis"/></svg>X</li>
        <li><span class="branch"></span><svg class="icon"><use href="#axis"/></svg>Y</li>
        <li><span class="branch"></span><svg class="icon"><use href="#axis"/></svg>Z</li>
        <li><span class="branch"><button aria-label="展开"></button></span><svg class="icon"><use href="#extrude"/></svg>Extrude1</li>
        <li><span class="branch"></span><svg class="icon"><use href="#chamfer"/></svg>Chamfer1</li>
        <li><span class="branch"><button aria-label="展开"></button></span><svg class="icon"><use href="#hole"/></svg>M30x3.5 Tapped Hole1</li>
      </ul>
      <div class="hscroll"><button class="left" aria-label="向左滚动"></button><div class="thumb"></div><button class="right" aria-label="向右滚动"></button></div>
      <button class="splitter" aria-label="折叠面板"><i></i><i></i><i></i></button>
    </aside>
    <main class="viewport">
      <svg class="model" viewBox="206 134 492 529" role="img" aria-label="零件模型">
        <defs>
          <linearGradient id="body" gradientUnits="userSpaceOnUse" x1="269" y1="480" x2="552" y2="490"><stop offset="0" stop-color="#2a552a"/><stop offset=".2" stop-color="#285028"/><stop offset=".5" stop-color="#285228"/><stop offset="1" stop-color="#4f9d4f"/></linearGradient>
          <linearGradient id="rim" gradientUnits="userSpaceOnUse" x1="395" y1="425" x2="535" y2="460"><stop offset="0" stop-color="#4a914a"/><stop offset=".5" stop-color="#5cb25c"/><stop offset="1" stop-color="#78dc78"/></linearGradient>
          <linearGradient id="bore" x1="0" y1="0" x2="1" y2="0"><stop offset="0" stop-color="#4c974c"/><stop offset=".4" stop-color="#2c5a2c"/><stop offset=".75" stop-color="#285028"/><stop offset="1" stop-color="#3a743a"/></linearGradient>
          <linearGradient id="lip" x1="0" y1="0" x2="1" y2="0"><stop offset="0" stop-color="#78dc78"/><stop offset=".5" stop-color="#4e9a4e"/><stop offset="1" stop-color="#4a914a"/></linearGradient>
          <clipPath id="boreclip"><ellipse cx="424" cy="374.500" rx="31.900" ry="28"/></clipPath>
        </defs>
        <g stroke="#071107" stroke-width="1.200">
          <path d="M286 376L269 473A137.800 118.100 12 0 0 415 598A137.800 118.100 12 0 0 543 487L559.500 392" fill="url(#body)"/>
          <ellipse cx="422.700" cy="383.500" rx="137.800" ry="118.100" transform="rotate(12 422.700 383.500)" fill="url(#rim)"/>
          <ellipse cx="424.400" cy="372" rx="113.700" ry="97.500" transform="rotate(12 424.400 372)" fill="#64bb64"/>
          <ellipse cx="424.500" cy="371.800" rx="36.500" ry="31.200" transform="rotate(12 424.500 371.800)" fill="url(#lip)"/>
          <ellipse cx="424" cy="374.500" rx="31.900" ry="28" fill="url(#bore)"/>
          <g clip-path="url(#boreclip)"><ellipse cx="419" cy="409" rx="33" ry="29" fill="#5fb25f"/></g>
          <ellipse cx="424" cy="374.500" rx="31.900" ry="28" fill="none"/>
        </g>
        <g class="triad">
          <path d="M247 605L266 597" stroke="#1d701d" stroke-width="3"/><path d="M262 594l10-2-7 8z" fill="#1d8a1d" stroke="#0d500d"/>
          <path d="M247 605l9 14" stroke="#b01818" stroke-width="3"/><path d="M253 620l6-5 3 12z" fill="#e04040" stroke="#901010"/>
          <path d="M247 606V598" stroke="#1212a8" stroke-width="3"/><path d="M245 598l2.500-7 2.500 7z" fill="#2020e0" stroke="#10109a" stroke-width="2"/>
          <text x="245" y="589" fill="#1818d0">Z</text><text x="270" y="593" fill="#0c8a1c">Y</text><text x="259" y="635" fill="#e01818">X</text>
        </g>
      </svg>
      <div class="hud">
        <button aria-label="整屏显示"><svg class="icon"><use href="#zoomfit"/></svg></button><button aria-label="局部放大"><svg class="icon"><use href="#zoomarea"/></svg></button><button aria-label="上一视图"><svg class="icon"><use href="#prevview"/></svg></button><button aria-label="剖面视图"><svg class="icon"><use href="#section"/></svg></button><button aria-label="视图定向"><svg class="icon"><use href="#vieworient"/></svg></button><button class="caret" aria-label="视图定向选项"></button><button aria-label="显示样式"><svg class="icon"><use href="#cube"/></svg></button><button class="caret" aria-label="显示样式选项"></button>
        <div class="dropdown">
          <button class="toggle" aria-label="隐藏/显示项目"><svg class="icon"><use href="#glasses"/></svg><i class="arrow"></i></button>
          <div class="menu">
            <button aria-label="基准面"><svg class="icon"><use href="#m-plane"/></svg></button><button class="on" aria-label="原点"><svg class="icon"><use href="#m-origin"/></svg></button>
            <button aria-label="基准轴"><svg class="icon"><use href="#axis"/></svg></button><button aria-label="临时轴"><svg class="icon"><use href="#axisgray"/></svg></button>
            <button aria-label="坐标系"><svg class="icon"><use href="#m-triad"/></svg></button><button aria-label="点"><svg class="icon"><use href="#m-point"/></svg></button>
            <button class="on" aria-label="曲线"><svg class="icon"><use href="#m-curve"/></svg></button><button aria-label="分型线"><svg class="icon"><use href="#m-part"/></svg></button>
            <button class="on" aria-label="尺寸"><svg class="icon"><use href="#dim"/></svg></button><button class="marked" aria-label="所有注解"><svg class="icon"><use href="#m-note"/></svg></button>
            <button class="on" aria-label="草图"><svg class="icon"><use href="#sketch"/></svg></button><button class="on" aria-label="3D 草图平面"><svg class="icon"><use href="#region"/></svg></button>
            <button aria-label="草图几何关系"><svg class="icon"><use href="#m-perp"/></svg></button><button aria-label="网格"><svg class="icon"><use href="#m-grid"/></svg></button>
            <button aria-label="光源"><svg class="icon"><use href="#bulb"/></svg></button><button aria-label="相机"></button>
            <button aria-label="贴图"><svg class="icon"><use href="#m-can"/></svg></button><button aria-label="边界框"><svg class="icon"><use href="#m-box"/></svg></button>
            <button aria-label="步路点"><svg class="icon"><use href="#m-line"/></svg></button><button class="label">(D1)</button>
            <button aria-label="相机视图"><svg class="icon"><use href="#m-cam"/></svg></button><button aria-label="焊缝"><svg class="icon"><use href="#m-weld"/></svg></button>
            <button class="on" aria-label="质心"><svg class="icon"><use href="#com"/></svg></button>
          </div>
          <svg class="callout" viewBox="0 0 130 94" aria-hidden="true"><path d="M126 3L14 78" stroke="#f00" stroke-width="3"/><path d="M0 87l12-12 5 9z" fill="#f00" stroke="#f00"/></svg>
          <div class="tooltip" role="tooltip"><strong>观阅所有注解</strong><span>整体覆写所有注解的显示。</span><svg class="tail" viewBox="0 0 24 38" aria-hidden="true"><path d="M4 38V3l17 35" fill="#e0e2e8"/></svg></div>
        </div>
        <button aria-label="编辑外观"><svg class="icon"><use href="#ball"/></svg></button><button aria-label="应用布景"><svg class="icon"><use href="#ballg"/></svg></button><button class="caret" aria-label="布景选项"></button><button aria-label="视图设定"><svg class="icon"><use href="#display"/></svg></button><button class="caret" aria-label="视图设定选项"></button>
      </div>
      <nav class="taskpane"><button aria-label="论坛"><svg class="icon"><use href="#chat"/></svg></button><button aria-label="资源"><svg class="icon"><use href="#home"/></svg></button><button aria-label="设计库"><svg class="icon"><use href="#books"/></svg></button><button aria-label="文件探索器"><svg class="icon"><use href="#folder"/></svg></button><button aria-label="视图调色板"><svg class="icon"><use href="#palette"/></svg></button><button class="active" aria-label="外观布景"><svg class="icon"><use href="#ball"/></svg></button><button aria-label="自定义属性"><svg class="icon"><use href="#props"/></svg></button></nav>
    </main>
  </div>
  <nav class="sheets"><button class="nav first" aria-label="第一个"></button><button class="nav prev" aria-label="上一个"></button><button class="nav next" aria-label="下一个"></button><button class="nav end" aria-label="最后一个"></button><button class="sheet active">模型</button><button class="sheet">Motion Study 1</button></nav>
</div>
<aside class="sketchbar">
  <div class="dots"></div>
  <div class="tool"><button aria-label="草图绘制"><svg class="icon"><use href="#sketch"/></svg></button><button class="caret" aria-label="选项"></button></div>
  <div class="tool"><button aria-label="智能尺寸"><svg class="icon"><use href="#dim"/></svg></button><button class="caret" aria-label="选项"></button></div>
  <hr>
  <div class="tool"><button aria-label="直线"><svg class="icon"><use href="#s-line"/></svg></button><button class="caret" aria-label="选项"></button></div>
  <div class="tool"><button aria-label="矩形"><svg class="icon"><use href="#s-rect"/></svg></button><button class="caret" aria-label="选项"></button></div>
  <div class="tool"><button aria-label="槽口"><svg class="icon"><use href="#s-slot"/></svg></button><button class="caret" aria-label="选项"></button></div>
  <div class="tool"><button aria-label="圆"><svg class="icon"><use href="#s-circle"/></svg></button><button class="caret" aria-label="选项"></button></div>
  <div class="tool"><button aria-label="圆弧"><svg class="icon"><use href="#s-arc"/></svg></button><button class="caret" aria-label="选项"></button></div>
  <div class="tool"><button aria-label="样条曲线"><svg class="icon"><use href="#s-spline"/></svg></button><button class="caret" aria-label="选项"></button></div>
  <div class="tool"><button aria-label="椭圆"><svg class="icon"><use href="#s-ellipse"/></svg></button><button class="caret" aria-label="选项"></button></div>
  <div class="tool off"><button aria-label="圆角"><svg class="icon"><use href="#s-fillet"/></svg></button><button class="caret" aria-label="选项"></button></div>
  <div class="tool"><button aria-label="多边形"><svg class="icon"><use href="#s-hex"/></svg></button></div>
  <div class="tool"><button aria-label="点"><svg class="icon"><use href="#s-point"/></svg></button></div>
  <div class="tool"><button aria-label="平面"><svg class="icon"><use href="#region"/></svg></button></div>
  <div class="tool"><button aria-label="文字"><svg class="icon" viewBox="0 0 16 16"><text class="letter outline" x="8" y="15">A</text></svg></button></div>
  <hr>
  <div class="tool off"><button aria-label="剪裁"><svg class="icon"><use href="#s-trim"/></svg></button><button class="caret" aria-label="选项"></button></div>
  <div class="tool"><button aria-label="转换实体"><svg class="icon"><use href="#s-convert"/></svg></button><button class="caret" aria-label="选项"></button></div>
  <div class="tool"><button aria-label="等距实体"><svg class="icon"><use href="#s-offset"/></svg></button></div>
  <div class="tool"><button aria-label="镜向实体"><svg class="icon"><use href="#s-mirror"/></svg></button></div>
  <div class="tool off"><button aria-label="线性阵列"><svg class="icon"><use href="#s-pattern"/></svg></button><button class="caret" aria-label="选项"></button></div>
  <div class="tool off"><button aria-label="移动实体"><svg class="icon"><use href="#s-move"/></svg></button><button class="caret" aria-label="选项"></button></div>
  <hr>
  <div class="tool off"><button aria-label="几何关系"><svg class="icon"><use href="#s-rel"/></svg></button><button class="caret" aria-label="选项"></button></div>
  <button class="expand" aria-label="更多工具"><svg class="chev"><use href="#chevdown"/></svg></button>
</aside>
</div>

<div class="filterbar">
  <div class="vdots"></div>
  <button aria-label="过滤器"><svg class="icon"><use href="#f-gray"/></svg></button><button aria-label="清除过滤器"><svg class="icon"><use href="#f-gray2"/></svg></button><button aria-label="所有过滤器"><svg class="icon"><use href="#f-blue"/></svg></button>
  <div class="split"><button class="pressed" aria-label="选择"><svg class="icon"><use href="#cursor"/></svg></button><button class="caret" aria-label="选择方式"></button></div>
  <button aria-label="反选"><svg class="icon"><use href="#cursor2"/></svg></button>
  <div class="vsep"></div>
  <button aria-label="顶点"><svg class="icon"><use href="#f1"/><use href="#fun"/></svg></button><button aria-label="边线"><svg class="icon"><use href="#f2"/><use href="#fun"/></svg></button><button aria-label="面"><svg class="icon"><use href="#f3"/><use href="#fun"/></svg></button><button aria-label="曲面"><svg class="icon"><use href="#f4"/><use href="#fun"/></svg></button><button aria-label="实体"><svg class="icon"><use href="#f5"/><use href="#fun"/></svg></button><button aria-label="轴"><svg class="icon"><use href="#axis"/><use href="#fun"/></svg></button><button aria-label="基准面"><svg class="icon"><use href="#m-plane"/><use href="#fun"/></svg></button><button aria-label="草图点"><svg class="icon"><use href="#f8"/><use href="#fun"/></svg></button><button aria-label="草图"><svg class="icon"><use href="#sketch"/><use href="#fun"/></svg></button><button aria-label="草图段"><svg class="icon"><use href="#f10"/><use href="#fun"/></svg></button><button aria-label="中点"><svg class="icon"><use href="#f11"/><use href="#fun"/></svg></button><button aria-label="中心符号"><svg class="icon"><use href="#f12"/><use href="#fun"/></svg></button><button aria-label="中心线"><svg class="icon"><use href="#f13"/><use href="#fun"/></svg></button><button aria-label="尺寸"><svg class="icon"><use href="#dim"/><use href="#fun"/></svg></button><button aria-label="表面粗糙度"><svg class="icon"><use href="#f15"/><use href="#fun"/></svg></button><button aria-label="形位公差"><svg class="icon"><use href="#f16"/><use href="#fun"/></svg></button><button aria-label="注释"><svg class="icon" viewBox="0 0 16 16"><use href="#f17"/><text class="letter small" x="7" y="11">N</text><use href="#fun"/></svg></button><button aria-label="基准特征"><svg class="icon" viewBox="0 0 16 16"><use href="#f18"/><text class="letter small" x="9" y="13">A</text><use href="#fun"/></svg></button><button aria-label="焊接符号"><svg class="icon"><use href="#f19"/><use href="#fun"/></svg></button><button aria-label="焊缝"><svg class="icon"><use href="#f20"/><use href="#fun"/></svg></button><button aria-label="基准目标"><svg class="icon" viewBox="0 0 16 16"><use href="#f21"/><text class="letter small" x="7" y="12">A</text><use href="#fun"/></svg></button><button aria-label="装饰螺纹线"><svg class="icon"><use href="#f22"/><use href="#fun"/></svg></button><button aria-label="块"><svg class="icon" viewBox="0 0 16 16"><use href="#f23"/><text class="letter small" x="6" y="13">A</text><use href="#fun"/></svg></button><button aria-label="销钉"><svg class="icon"><use href="#f24"/><use href="#fun"/></svg></button>
  <button class="more" aria-label="更多过滤器"><svg class="chev"><use href="#chev"/></svg></button>
</div>

<footer class="status">
  <span class="product">SolidWorks Premium 2014 x64 版</span>
  <span class="mode">在编辑 零件</span>
  <button class="units">MMGS<i class="arrow up"></i></button>
  <button class="qhelp" aria-label="帮助"><svg class="icon" viewBox="0 0 16 16"><use href="#qmark"/><text class="letter green" x="8" y="12">?</text></svg></button>
  <button class="tagbtn" aria-label="标签"><svg class="icon"><use href="#tag"/></svg></button>
  <span class="resize"></span>
</footer>
</div>
</body>
</html>
```
FILE: styles.css
```css
* { box-sizing: border-box; }
body {
  margin: 0;
  background: #4a4d5c;
  color: #111;
  font: 12px/14px "Noto Sans", "Noto Sans CJK SC", sans-serif;
}
button {
  margin: 0;
  padding: 0;
  border: 0;
  background: none;
  color: inherit;
  font: inherit;
  display: flex;
  align-items: center;
  justify-content: center;
  flex: none;
}
.sprite { position: absolute; width: 0; height: 0; }
.icon { width: 16px; height: 16px; flex: none; display: block; overflow: visible; }
.chev { width: 12px; height: 12px; display: block; }
.y { fill: url(#gy); stroke: #6b4c00; }
.o { fill: #f79a1c; stroke: #8a3c00; }
.yl { fill: none; stroke: #8a6400; }
.g { fill: url(#gg); stroke: #04580a; }
.gl { fill: none; stroke: #04580a; }
.k { fill: none; stroke: #222; }
.b { fill: none; stroke: #1212a8; stroke-width: 2; }
.r { fill: #fff; stroke: #d01818; }
.gr { fill: none; stroke: #85888c; }
.w { fill: #fff; stroke: #8c8f93; }
.y, .yl, .o, .g, .gl, .k, .r, .w { shape-rendering: crispEdges; }
.letter { font: bold 12px "Liberation Serif", serif; text-anchor: middle; }
.letter.blue { fill: #1333a8; }
.letter.green { fill: #0a9a1c; font: bold 12px "Noto Sans", sans-serif; }
.letter.small { fill: #111; font-size: 9px; }
.letter.outline { fill: #d4dcf4; stroke: #1818c8; stroke-width: 1; font-size: 20px; }

.arrow {
  display: block;
  width: 0;
  height: 0;
  border: 3px solid transparent;
  border-top-color: #333;
  border-bottom: 0;
}
.arrow.up { border-top: 0; border-bottom: 3px solid #333; }
.caret { width: 13px; }
.caret::before {
  content: "";
  border: 3px solid transparent;
  border-top-color: #444;
  border-bottom: 0;
}

.window {
  min-height: 100vh;
  display: flex;
  flex-direction: column;
  padding: 7px 7px 0;
  border: 1px solid #30344a;
  border-radius: 6px;
  background: #dddfed;
}

/* Title bar */
.titlebar {
  display: flex;
  height: 29px;
  border-bottom: 1px solid #111;
  background: #a7a9ac;
}
.brand {
  display: flex;
  align-items: center;
  width: 131px;
  padding-left: 3px;
  border-left: 5px solid #dc2618;
  background: linear-gradient(#3c4650, #1b232b);
  color: #fff;
}
.brand-mark { width: 20px; height: 22px; margin-left: 1px; }
.brand-name { margin-left: 5px; font: italic 400 14px/16px "Open Sans", sans-serif; }
.brand-name b { font-weight: 700; }
.menus { display: flex; flex: 1; justify-content: space-between; padding: 0 6px 0 18px; }
.key { font-size: 11px; }
.win-controls {
  display: flex;
  border-left: 1px solid #74777b;
  background: #d6d9de;
}
.win-controls button { width: 23px; }
.win-controls .caret { width: 12px; }

/* Command ribbon */
.ribbon {
  display: flex;
  height: 76px;
  padding-left: 8px;
  background: #d8dbe0;
}
.group { display: flex; padding-right: 11px; position: relative; margin-right: 2px; }
.group:not(.last)::after {
  content: "";
  position: absolute;
  right: 0;
  top: 4px;
  bottom: 7px;
  border-right: 1px solid #55585c;
}
.big { width: 46px; flex-direction: column; padding-bottom: 3px; }
.big.spaced { margin: 0 0 0 4px; }
.big.drop { justify-content: flex-start; padding: 6px 0 11px; }
.big.drop .arrow { margin-top: auto; }
.big.narrow { width: 34px; }
.stack { display: flex; flex-direction: column; padding: 1px 0 6px 3px; }
.stack.second { padding-left: 11px; }
.stack button { gap: 7px; flex: 1; justify-content: flex-start; }
.ribbon .more { margin-left: auto; width: 15px; padding-bottom: 4px; }

/* Workspace */
.workspace { display: flex; flex: 1; }
.document { display: flex; flex-direction: column; flex: 1; min-width: 0; }
.tabrow {
  display: flex;
  justify-content: space-between;
  align-items: flex-end;
  background: #fff;
  border-top: 1px solid #111;
}
.cmd-tabs { display: flex; }
.cmd-tabs button {
  width: 56px;
  height: 20px;
  padding-bottom: 2px;
  border: 1px solid #111;
  border-width: 0 1px 2px 0;
  background: #a7a9ac;
}
.cmd-tabs .active { background: #d8dbe0; margin-top: -1px; height: 21px; border-bottom-width: 1px; }
.cmd-tabs .wide { width: 66px; font-size: 11px; }
.cmd-tabs .wider { width: 75px; }
.doc-controls { display: flex; padding-right: 7px; }
.doc-controls button { width: 23px; height: 14px; }
.body { display: flex; flex: 1; }

/* Feature manager panel */
.panel {
  position: relative;
  display: flex;
  flex-direction: column;
  width: 198px;
  border-right: 2px solid #222;
  background: #e3e6ea;
}
.panel-tabs {
  display: flex;
  height: 30px;
  padding-top: 8px;
  border-bottom: 1px solid #333;
  background: linear-gradient(#ccd1da 3px, #7d89a0 3px, #7d89a0 4px, #d8dbe0 4px);
}
.panel-tabs button { width: 28px; border: 1px solid #222; border-left-width: 0; background: #a7a9ac; }
.panel-tabs .active { background: #e3e6ea; border-bottom: 0; border-left-width: 1px; margin-bottom: -1px; }
.panel-tabs .more { border: 0; background: none; margin-left: auto; width: 20px; }
.filter {
  display: flex;
  align-items: center;
  height: 18px;
  margin: 1px 1px 0;
  padding-left: 5px;
  border: 1px solid #444;
  background: #f0f1f2;
}
.filter input { flex: 1; min-width: 0; border: 0; padding: 0 4px; height: 14px; background: none; font: inherit; }
.tree-root { display: flex; align-items: center; gap: 5px; height: 18px; margin: 4px 0 0 2px; white-space: nowrap; }
.tree { margin: 0; padding: 0; list-style: none; border-bottom: 2px solid #2d62b4; }
.tree li { display: flex; align-items: center; height: 18px; padding-left: 6px; white-space: nowrap; }
.tree li .icon { margin-right: 5px; }
.branch { position: relative; width: 15px; height: 18px; }
.branch::before { content: ""; position: absolute; left: 4px; top: 0; bottom: 0; border-left: 1px dotted #777; }
.branch::after { content: ""; position: absolute; left: 5px; right: 0; top: 9px; border-top: 1px dotted #777; }
.tree li:last-child .branch::before { bottom: 9px; }
.branch button {
  position: absolute;
  z-index: 1;
  left: 0;
  top: 5px;
  width: 9px;
  height: 9px;
  border: 1px solid #9a9da3;
  background:
    linear-gradient(#335, #335) center / 5px 1px no-repeat,
    linear-gradient(#335, #335) center / 1px 5px no-repeat,
    #fff;
}
.hscroll { display: flex; height: 16px; margin-top: auto; margin-bottom: 4px; background: #eef0f1; }
.hscroll button { width: 17px; }
.hscroll button::before { content: ""; border: 3px solid transparent; }
.hscroll .left::before { border-right-color: #333; border-left: 0; }
.hscroll .right { margin-left: auto; }
.hscroll .right::before { border-left-color: #333; border-right: 0; }
.thumb {
  width: 59%;
  border: 1px solid #94979b;
  border-radius: 2px;
  background: repeating-linear-gradient(90deg, #555 0 1px, transparent 1px 3px) center / 8px 6px no-repeat, linear-gradient(#f4f5f6, #d2d4d7);
}
.splitter {
  position: absolute;
  z-index: 2;
  right: -9px;
  top: 235px;
  width: 8px;
  height: 39px;
  flex-direction: column;
  gap: 3px;
  border: 1px solid #333;
  border-left: 0;
  background: #e3e6ea;
}
.splitter i { border: 3px solid transparent; border-left: 0; border-right-color: #333; }

/* Graphics area */
.viewport { position: relative; flex: 1; min-width: 0; background: #fff; }
.model { position: absolute; inset: 0; width: 100%; height: 100%; }
.triad text { font: bold 9px "Liberation Serif", serif; }
.hud { position: relative; display: flex; justify-content: center; padding: 8px 9px 0 0; height: 30px; }
.hud > button { width: 23px; }
.hud > .caret { width: 13px; }
.dropdown { position: relative; margin-left: 2px; }
.toggle {
  width: 36px;
  height: 23px;
  gap: 6px;
  border: 1px solid #8f9296;
  background: linear-gradient(#f0f1f2, #d4d6d9);
}
.menu {
  position: absolute;
  left: 0;
  top: 23px;
  display: grid;
  grid-template-columns: 25px 25px;
  grid-auto-rows: 25px;
  border: 1px solid #8f9296;
  background: #fcfcfc;
  box-shadow: 3px 3px 3px rgba(0, 0, 0, .5);
}
.menu button { margin: 1px; }
.menu .on { background: #c5c7cb; border: 1px solid #55585c; }
.menu .marked { outline: 3px solid #f00; background: #fff; z-index: 1; }
.menu .label { font-size: 9px; }
.callout { position: absolute; left: 53px; top: 37px; width: 130px; height: 94px; z-index: 3; }
.tooltip {
  position: absolute;
  z-index: 2;
  left: 26px;
  top: 187px;
  display: flex;
  flex-direction: column;
  gap: 5px;
  padding: 5px 20px 5px 6px;
  border: 1px solid #8f9296;
  border-radius: 6px;
  background: linear-gradient(#e3e5ea, #dcdfe6);
  box-shadow: 2px 2px 3px rgba(0, 0, 0, .5);
  white-space: nowrap;
}
.tail { position: absolute; left: 8px; top: -37px; width: 24px; height: 38px; }
.taskpane { position: absolute; right: 0; top: 39px; }
.taskpane button { width: 24px; height: 24px; border: 1px solid #222; border-right: 0; background: #a7a9ac; }
.taskpane .active { background: #fff; }

/* Sheet tabs */
.sheets { display: flex; height: 15px; border-top: 1px solid #111; background: #e0e4e9; }
.nav { width: 16px; border: 1px solid #85888c; background: #a7a9ac; }
.nav::before { content: ""; border: 4px solid transparent; }
.first::before, .prev::before { border-right-color: #77797c; border-left: 0; }
.next::before, .end::before { border-left-color: #77797c; border-right: 0; }
.first::before { box-shadow: -1px 0 #77797c; }
.end::before { box-shadow: 1px 0 #77797c; }
.sheet { padding: 0 14px; border: 1px solid #222; border-top: 0; background: #a7a9ac; font-size: 11px; }
.sheet.active { margin-left: 4px; padding: 0 10px; background: #e3e6ea; font-size: 12px; }
.sheet:last-child { padding: 0 13px 0 6px; }

/* Sketch toolbar */
.sketchbar {
  display: flex;
  flex-direction: column;
  width: 46px;
  padding: 5px 2px 7px 2px;
  border-top: 1px solid #111;
  border-bottom: 1px solid #a1a4a9;
  background: #d8dbe0;
}
.dots { height: 2px; margin: 0 2px 6px; background: repeating-linear-gradient(90deg, #555 0 2px, transparent 2px 4px); }
.tool { display: flex; height: 23px; }
.tool button { width: 24px; }
.tool .caret { width: 18px; }
.tool.off .caret::before { border-width: 4px 4px 0; border-top-color: #7c7f83; }
.sketchbar hr { width: 38px; margin: 3px 2px 4px; border: 0; border-top: 1px solid #666; }
.expand { margin-top: auto; }

/* Selection filter toolbar */
.filterbar {
  display: flex;
  align-items: center;
  height: 30px;
  padding-bottom: 3px;
  border-top: 1px solid #f2f3f5;
  background: #d8dbe0;
}
.filterbar button { width: 23px; height: 23px; }
.filterbar .caret { width: 13px; }
.vdots { width: 2px; height: 22px; margin: 0 5px 0 4px; background: repeating-linear-gradient(#555 0 2px, transparent 2px 4px); }
.split { display: flex; margin-left: 2px; border: 1px solid #85888c; background: #e6e8ea; }
.filterbar .split button { height: 21px; }
.filterbar .split .pressed { width: 26px; background: #b4b6b9; border-right: 1px solid #85888c; }
.filterbar .split .caret { width: 12px; }
.vsep { height: 17px; margin: 0 4px 0 2px; border-left: 1px solid #777; }
.filterbar .more { margin-left: auto; width: 30px; }

/* Status bar */
.status {
  display: flex;
  align-items: center;
  height: 27px;
  padding: 0 1px 8px 2px;
  border-top: 2px solid #222;
  background: #dcdfe6;
}
.product { margin-right: auto; }
.mode { margin-right: 51px; }
.units { gap: 17px; }
.qhelp { margin-left: 16px; }
.tagbtn { margin: 0 12px 0 48px; }
.resize { width: 12px; height: 12px; background: radial-gradient(circle, #b0b4bc 1px, transparent 1px) 0 0 / 4px 4px; }
```
